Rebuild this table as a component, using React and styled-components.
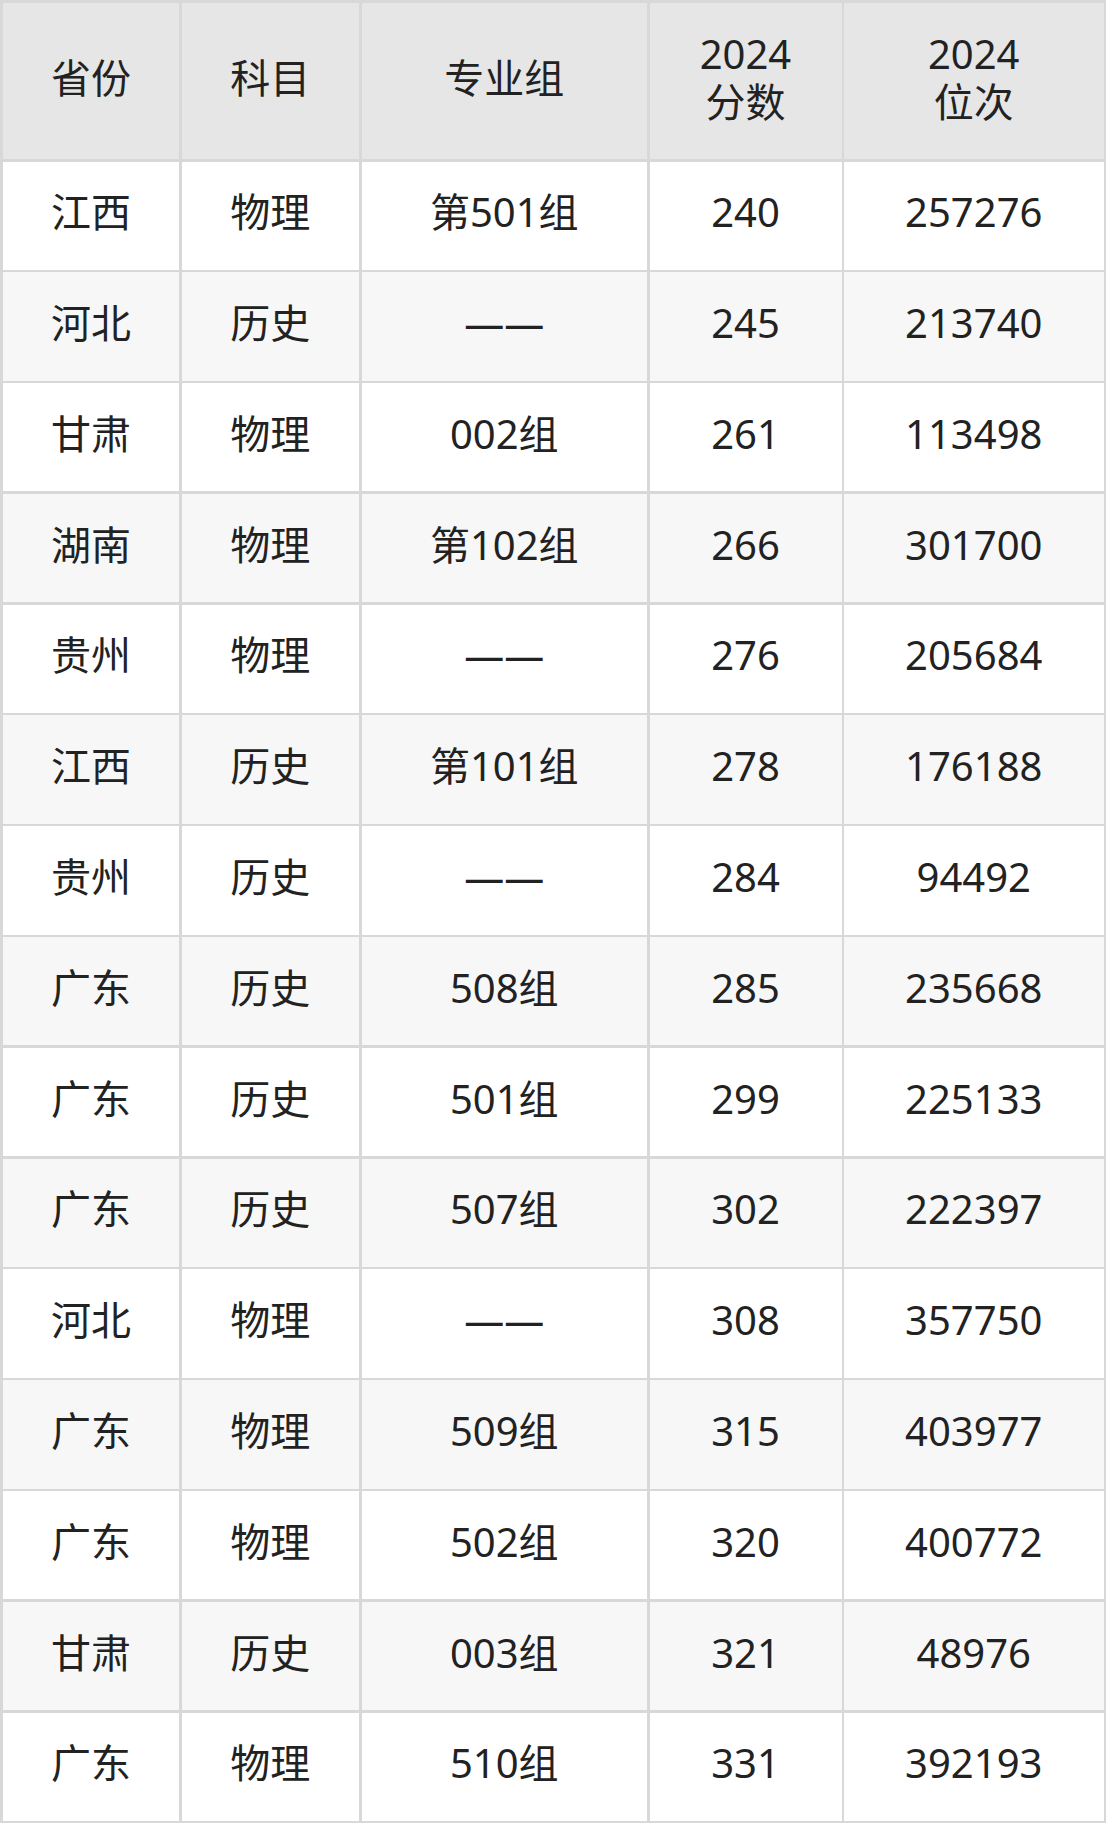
import React from "react";
import styled, { createGlobalStyle } from "styled-components";

const Global = createGlobalStyle`
  html, body { margin: 0; padding: 0; background: #ffffff; }
  body { font-family: "Noto Sans", "Noto Sans CJK SC", sans-serif; }
`;

const Table = styled.div`
  display: grid;
  grid-template-columns: 176px 177.5px 285.5px 192px 259.5px;
  grid-template-rows: 156px repeat(15, 108.3px);
  gap: 2.5px;
  padding: 3px 2.5px 2.5px 3px;
  width: max-content;
  background: #d8d8d8;
`;

const Cell = styled.div`
  display: flex;
  align-items: center;
  justify-content: center;
  text-align: center;
  padding-bottom: ${(p) => (p.$head ? "7px" : "7px")};
  box-sizing: border-box;
  font-family: "Noto Sans", "Noto Sans CJK SC", sans-serif;
  font-size: 40px;
  line-height: 48px;
  color: #222222;
  background: ${(p) => (p.$head ? "#e6e6e6" : p.$alt ? "#f7f7f7" : "#ffffff")};
`;

const HeadText = styled.span`
  display: block;
`;

const headers = ["省份", "科目", "专业组", "2024\n分数", "2024\n位次"];

const rows = [
  ["江西", "物理", "第501组", "240", "257276"],
  ["河北", "历史", "——", "245", "213740"],
  ["甘肃", "物理", "002组", "261", "113498"],
  ["湖南", "物理", "第102组", "266", "301700"],
  ["贵州", "物理", "——", "276", "205684"],
  ["江西", "历史", "第101组", "278", "176188"],
  ["贵州", "历史", "——", "284", "94492"],
  ["广东", "历史", "508组", "285", "235668"],
  ["广东", "历史", "501组", "299", "225133"],
  ["广东", "历史", "507组", "302", "222397"],
  ["河北", "物理", "——", "308", "357750"],
  ["广东", "物理", "509组", "315", "403977"],
  ["广东", "物理", "502组", "320", "400772"],
  ["甘肃", "历史", "003组", "321", "48976"],
  ["广东", "物理", "510组", "331", "392193"],
];

export default function App() {
  return (
    <>
      <Global />
      <Table>
        {headers.map((h, i) => (
          <Cell key={"h" + i} $head>
            <div>
              {h.split("\n").map((l, j) => (
                <HeadText key={j}>{l}</HeadText>
              ))}
            </div>
          </Cell>
        ))}
        {rows.map((r, ri) =>
          r.map((c, ci) => (
            <Cell key={ri + "-" + ci} $alt={ri % 2 === 1}>
              {c}
            </Cell>
          ))
        )}
      </Table>
    </>
  );
}
